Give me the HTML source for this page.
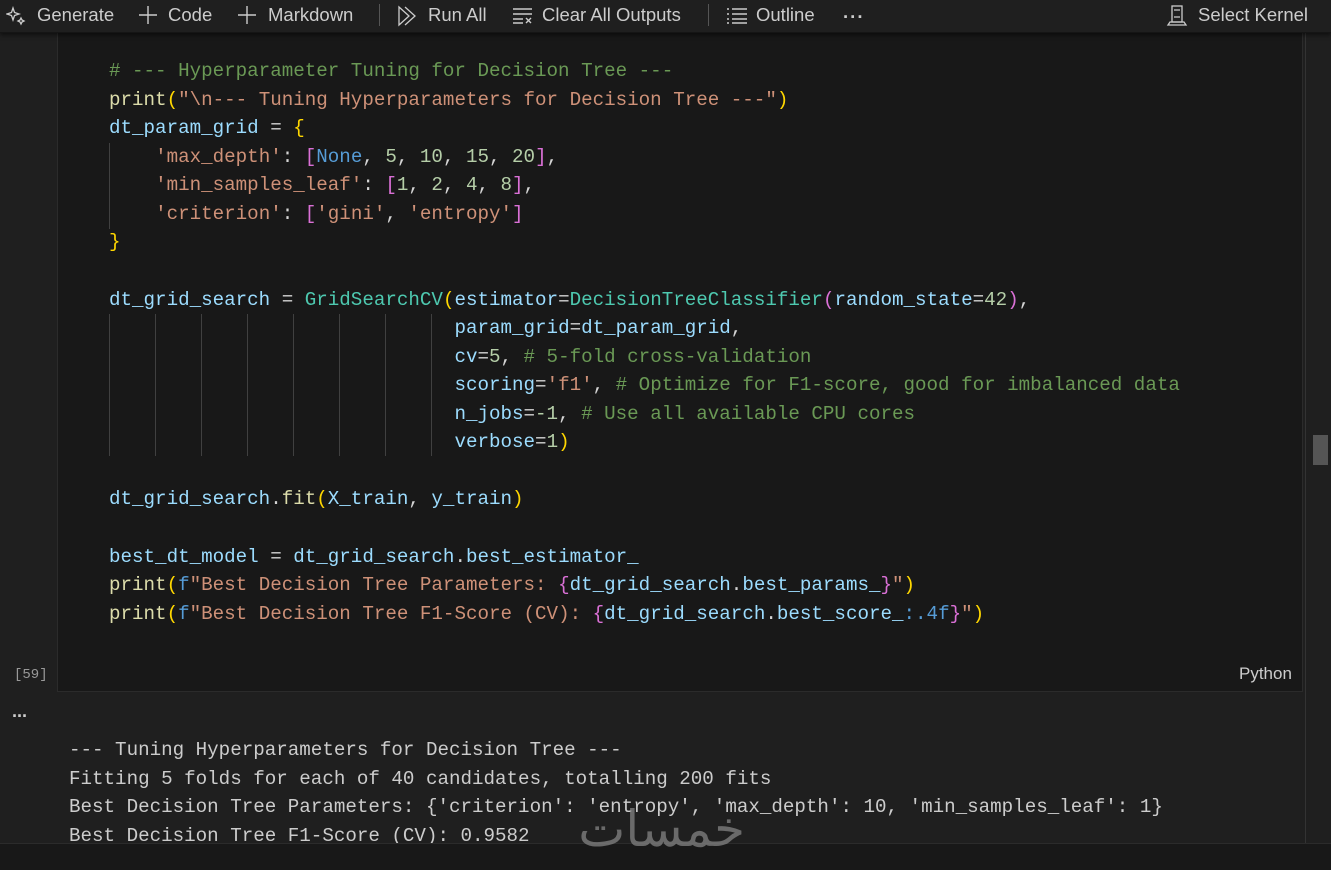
<!DOCTYPE html>
<html><head><meta charset="utf-8">
<style>
*{margin:0;padding:0;box-sizing:border-box}
body{width:1331px;height:870px;background:#1f1f1f;overflow:hidden;position:relative;font-family:"Segoe UI","Liberation Sans",sans-serif;color:#cccccc}
.tb{position:absolute;left:0;top:0;width:1331px;height:33px;background:#1f1f1f;border-bottom:1px solid #151515;box-shadow:0 2px 4px #0008;z-index:5;font-size:18.5px}
.tb span{position:absolute;top:4px;white-space:nowrap}
.tb svg{position:absolute}
.sep{position:absolute;top:4px;width:1px;height:22px;background:#555}
.cell{position:absolute;left:57px;top:33px;width:1246px;height:659px;background:#181818;border:1px solid #2b2b2b;border-top:none}
.code{position:absolute;left:109px;top:57px;font-family:"Liberation Mono",monospace;font-size:19.2px;line-height:28.57px;white-space:pre;color:#d4d4d4}
.c{color:#6a9955}.s{color:#ce9178}.f{color:#dcdcaa}.v{color:#9cdcfe}.y{color:#ffd700}.p{color:#da70d6}.b{color:#179fff}.n{color:#b5cea8}.k{color:#569cd6}.t{color:#4ec9b0}
.g{position:absolute;width:1px;background:#404040}
.out{position:absolute;left:69px;top:736px;font-family:"Liberation Mono",monospace;font-size:19.2px;line-height:28.5px;white-space:pre;color:#cccccc}
.bot{position:absolute;left:0;top:843px;width:1331px;height:27px;background:#181818;border-top:1px solid #2b2b2b}
.sb{position:absolute;left:1305px;top:33px;width:26px;height:810px;background:#1f1f1f;border-left:1px solid #333}
.m{position:absolute;left:1322px;width:6px;height:2px;background:#a08a20}
</style></head><body>
<div class="tb">
<svg style="left:6px;top:6px" width="20" height="20" viewBox="0 0 20 20" fill="none" stroke="#ccc" stroke-width="1.3"><path d="M7 2 L8.5 6.5 L13 8 L8.5 9.5 L7 14 L5.5 9.5 L1 8 L5.5 6.5Z"/><path d="M15 12 L16 14 L18 15 L16 16 L15 18 L14 16 L12 15 L14 14Z"/></svg>
<span style="left:37px">Generate</span>
<svg style="left:138px;top:5px" width="20" height="20" viewBox="0 0 20 20" stroke="#ccc" stroke-width="1.4"><path d="M10 1V19M1 10H19"/></svg>
<span style="left:168px">Code</span>
<svg style="left:237px;top:5px" width="20" height="20" viewBox="0 0 20 20" stroke="#ccc" stroke-width="1.4"><path d="M10 1V19M1 10H19"/></svg>
<span style="left:268px">Markdown</span>
<div class="sep" style="left:379px"></div>
<svg style="left:397px;top:5px" width="22" height="22" viewBox="0 0 22 22" fill="none" stroke="#ccc" stroke-width="1.3"><path d="M2 2L12 11L2 20Z"/><path d="M8 2L18 11L8 20"/></svg>
<span style="left:428px">Run All</span>
<svg style="left:512px;top:7px" width="22" height="18" viewBox="0 0 22 18" fill="none" stroke="#ccc" stroke-width="1.4"><path d="M1 2H20M1 7H20M1 12H11M1 16H11M14 11L19 16M19 11L14 16"/></svg>
<span style="left:542px">Clear All Outputs</span>
<div class="sep" style="left:708px"></div>
<svg style="left:726px;top:7px" width="22" height="18" viewBox="0 0 22 18" fill="none" stroke="#ccc" stroke-width="1.4"><path d="M1 2H3M1 7H3M1 12H3M1 16H3M6 2H21M6 7H21M6 12H21M6 16H21"/></svg>
<span style="left:756px">Outline</span>
<span style="left:843px;top:6px;letter-spacing:1px;font-weight:bold">···</span>
<svg style="left:1166px;top:4px" width="22" height="23" viewBox="0 0 22 23" fill="none" stroke="#ccc" stroke-width="1.3"><rect x="6" y="2" width="10" height="16"/><path d="M8 6H14M8 13H14M2 21H20L18 18H4Z"/></svg>
<span style="left:1198px">Select Kernel</span>
</div>
<div class="cell"></div>
<div class="g" style="left:109px;top:143px;height:86px"></div>
<div class="g" style="left:109px;top:314px;height:142px"></div>
<div class="g" style="left:155px;top:314px;height:142px"></div>
<div class="g" style="left:201px;top:314px;height:142px"></div>
<div class="g" style="left:247px;top:314px;height:142px"></div>
<div class="g" style="left:293px;top:314px;height:142px"></div>
<div class="g" style="left:339px;top:314px;height:142px"></div>
<div class="g" style="left:385px;top:314px;height:142px"></div>
<div class="g" style="left:431px;top:314px;height:142px"></div>
<div class="code"><span class="c"># --- Hyperparameter Tuning for Decision Tree ---</span>
<span class="f">print</span><span class="y">(</span><span class="s">"\n--- Tuning Hyperparameters for Decision Tree ---"</span><span class="y">)</span>
<span class="v">dt_param_grid</span> = <span class="y">{</span>
    <span class="s">'max_depth'</span>: <span class="p">[</span><span class="k">None</span>, <span class="n">5</span>, <span class="n">10</span>, <span class="n">15</span>, <span class="n">20</span><span class="p">]</span>,
    <span class="s">'min_samples_leaf'</span>: <span class="p">[</span><span class="n">1</span>, <span class="n">2</span>, <span class="n">4</span>, <span class="n">8</span><span class="p">]</span>,
    <span class="s">'criterion'</span>: <span class="p">[</span><span class="s">'gini'</span>, <span class="s">'entropy'</span><span class="p">]</span>
<span class="y">}</span>

<span class="v">dt_grid_search</span> = <span class="t">GridSearchCV</span><span class="y">(</span><span class="v">estimator</span>=<span class="t">DecisionTreeClassifier</span><span class="p">(</span><span class="v">random_state</span>=<span class="n">42</span><span class="p">)</span>,
                              <span class="v">param_grid</span>=<span class="v">dt_param_grid</span>,
                              <span class="v">cv</span>=<span class="n">5</span>, <span class="c"># 5-fold cross-validation</span>
                              <span class="v">scoring</span>=<span class="s">'f1'</span>, <span class="c"># Optimize for F1-score, good for imbalanced data</span>
                              <span class="v">n_jobs</span>=<span class="n">-1</span>, <span class="c"># Use all available CPU cores</span>
                              <span class="v">verbose</span>=<span class="n">1</span><span class="y">)</span>

<span class="v">dt_grid_search</span>.<span class="f">fit</span><span class="y">(</span><span class="v">X_train</span>, <span class="v">y_train</span><span class="y">)</span>

<span class="v">best_dt_model</span> = <span class="v">dt_grid_search</span>.<span class="v">best_estimator_</span>
<span class="f">print</span><span class="y">(</span><span class="k">f</span><span class="s">"Best Decision Tree Parameters: </span><span class="p">{</span><span class="v">dt_grid_search</span>.<span class="v">best_params_</span><span class="p">}</span><span class="s">"</span><span class="y">)</span>
<span class="f">print</span><span class="y">(</span><span class="k">f</span><span class="s">"Best Decision Tree F1-Score (CV): </span><span class="p">{</span><span class="v">dt_grid_search</span>.<span class="v">best_score_</span><span class="k">:.4f</span><span class="p">}</span><span class="s">"</span><span class="y">)</span></div>
<div style="position:absolute;left:14px;top:667px;font-family:'Liberation Mono',monospace;font-size:14px;color:#999">[59]</div>
<div style="position:absolute;left:1239px;top:664px;font-size:17px;color:#ccc">Python</div>
<div style="position:absolute;left:12px;top:706px;font-size:18px;color:#ccc;letter-spacing:-1px;font-weight:bold">···</div>
<div class="out">--- Tuning Hyperparameters for Decision Tree ---
Fitting 5 folds for each of 40 candidates, totalling 200 fits
Best Decision Tree Parameters: {'criterion': 'entropy', 'max_depth': 10, 'min_samples_leaf': 1}
Best Decision Tree F1-Score (CV): 0.9582</div>
<div class="bot"></div>
<div class="sb">
<div class="m" style="top:4px"></div>
<div class="m" style="top:248px"></div>
<div class="m" style="top:300px"></div>
<div class="m" style="top:328px;height:1px"></div>
<div style="position:absolute;left:7px;top:402px;width:15px;height:30px;background:#555"></div>
<div class="m" style="top:429px;height:1px"></div>
</div>
<div style="position:absolute;left:585px;top:800px;width:160px;font-family:'DejaVu Sans',sans-serif;font-size:50px;font-weight:200;color:#8a8a8a;opacity:.7;direction:rtl;white-space:nowrap">خمسات</div>
</body></html>
